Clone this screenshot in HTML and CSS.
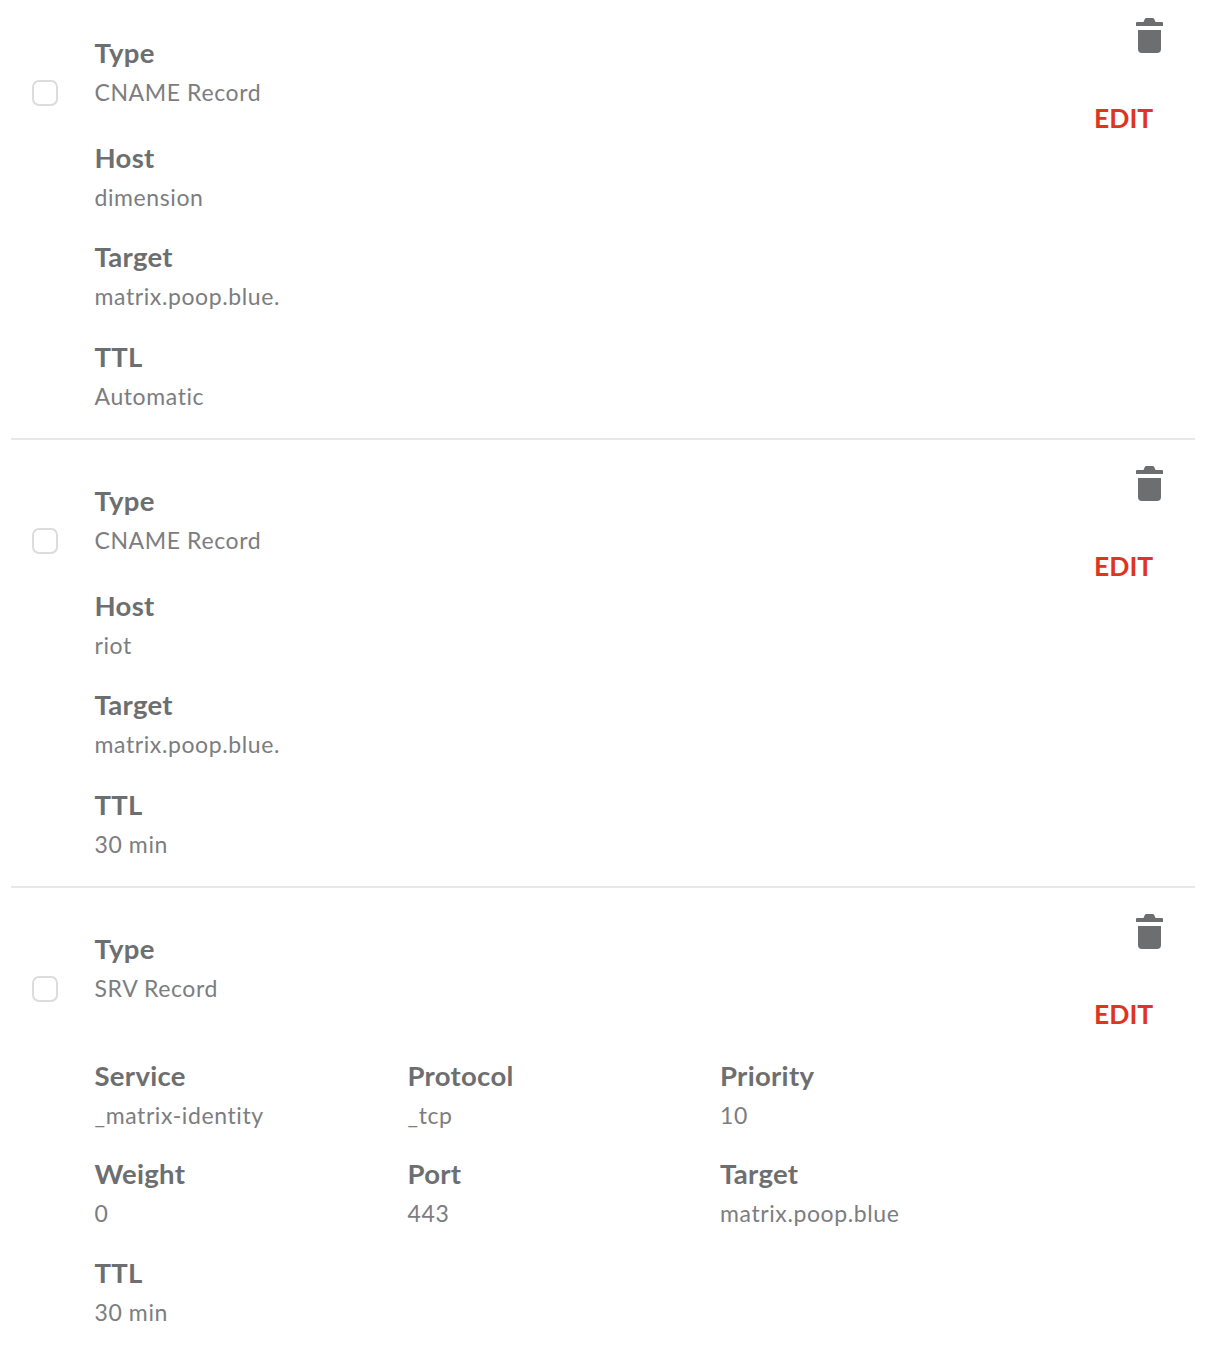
FILE: index.html
```html
<!DOCTYPE html>
<html lang="en">
<head>
<meta charset="utf-8">
<title>DNS records</title>
<link rel="stylesheet" href="styles.css">
</head>
<body>
<main class="list">
  <section class="record">
    <div class="head">
      <span class="check-cell"><span class="check"></span></span>
      <div class="field"><div class="label">Type</div><div class="value">CNAME Record</div></div>
      <div class="actions">
        <svg class="trash" viewBox="0 0 27 35"><path d="M7.500 4 8.800 1Q9.200 0 10.300 0h6.400q1.100 0 1.500 1L19.500 4H26q1 0 1 1v3H0V5q0-1 1-1ZM2 12h23v19q0 4-4 4H6q-4 0-4-4Z"/></svg>
        <a class="edit">EDIT</a>
      </div>
    </div>
    <div class="fields">
      <div class="field"><div class="label">Host</div><div class="value">dimension</div></div>
      <div class="field"><div class="label">Target</div><div class="value">matrix.poop.blue.</div></div>
      <div class="field"><div class="label">TTL</div><div class="value">Automatic</div></div>
    </div>
  </section>
  <section class="record">
    <div class="head">
      <span class="check-cell"><span class="check"></span></span>
      <div class="field"><div class="label">Type</div><div class="value">CNAME Record</div></div>
      <div class="actions">
        <svg class="trash" viewBox="0 0 27 35"><path d="M7.500 4 8.800 1Q9.200 0 10.300 0h6.400q1.100 0 1.500 1L19.500 4H26q1 0 1 1v3H0V5q0-1 1-1ZM2 12h23v19q0 4-4 4H6q-4 0-4-4Z"/></svg>
        <a class="edit">EDIT</a>
      </div>
    </div>
    <div class="fields">
      <div class="field"><div class="label">Host</div><div class="value">riot</div></div>
      <div class="field"><div class="label">Target</div><div class="value">matrix.poop.blue.</div></div>
      <div class="field"><div class="label">TTL</div><div class="value">30 min</div></div>
    </div>
  </section>
  <section class="record last">
    <div class="head srv">
      <span class="check-cell"><span class="check"></span></span>
      <div class="field"><div class="label">Type</div><div class="value">SRV Record</div></div>
      <div class="actions">
        <svg class="trash" viewBox="0 0 27 35"><path d="M7.500 4 8.800 1Q9.200 0 10.300 0h6.400q1.100 0 1.500 1L19.500 4H26q1 0 1 1v3H0V5q0-1 1-1ZM2 12h23v19q0 4-4 4H6q-4 0-4-4Z"/></svg>
        <a class="edit">EDIT</a>
      </div>
    </div>
    <div class="fields grid">
      <div class="field"><div class="label">Service</div><div class="value">_matrix-identity</div></div>
      <div class="field"><div class="label">Protocol</div><div class="value">_tcp</div></div>
      <div class="field"><div class="label">Priority</div><div class="value">10</div></div>
      <div class="field"><div class="label">Weight</div><div class="value">0</div></div>
      <div class="field"><div class="label">Port</div><div class="value">443</div></div>
      <div class="field"><div class="label">Target</div><div class="value">matrix.poop.blue</div></div>
      <div class="field"><div class="label">TTL</div><div class="value">30 min</div></div>
    </div>
  </section>
</main>
</body>
</html>
```
FILE: styles.css
```css
* { box-sizing: border-box; }
html, body { margin: 0; padding: 0; background: #fff; overflow: hidden; }
body { height: 1352px; font-family: Lato, "Noto Sans", sans-serif; color: #6d6e70; }
.list { margin: -8px 14px 0 11px; }
.record { height: 448px; padding-top: 46px; border-bottom: 2px solid #e8e8e8; }
.record.last { border-bottom: 0; height: auto; }
.head { display: flex; align-items: flex-start; height: 105px; }
.head.srv { height: 127px; }
.check-cell { width: 83.5px; height: 69px; display: flex; align-items: flex-end; padding: 0 0 1px 21px; }
.check { width: 26px; height: 26px; border: 2px solid #dcdcdc; border-radius: 7px; background: #fff; }
.head .field { flex: 1; }
.actions { width: 101px; margin-top: -20px; display: flex; flex-direction: column; height: 130px; }
.trash { width: 27px; height: 35px; fill: #6d6e70; align-self: flex-end; margin-right: 32px; }
.edit { margin-top: 49px; font-size: 26.500px; line-height: 32px; font-weight: 700; color: #e03420; }
.fields { padding-left: 83.500px; display: flex; flex-direction: column; gap: 30.400px; }
.fields.grid { display: grid; grid-template-columns: 313px 312.500px 1fr; column-gap: 0; row-gap: 29.250px; }
.label { font-size: 27.500px; line-height: 30px; font-weight: 700; letter-spacing: .3px; }
.value { font-size: 23px; line-height: 30px; margin-top: 9px; font-weight: 400; letter-spacing: .6px; color: #7c7d7f; }
```
